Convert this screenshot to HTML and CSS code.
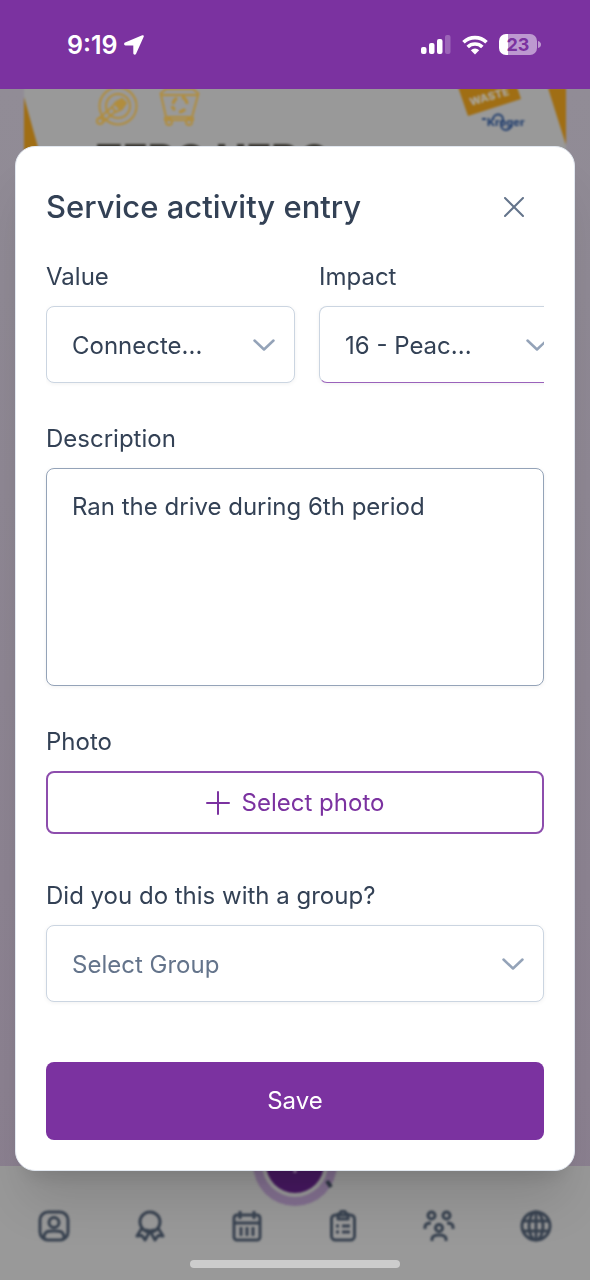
FILE: index.html
```html
<!DOCTYPE html>
<html lang="en">
<head>
<meta charset="utf-8">
<meta name="viewport" content="width=device-width, initial-scale=1">
<title>Service activity entry</title>
<link rel="stylesheet" href="styles.css">
</head>
<body>
<div class="app">
  <header class="status">
    <div class="status-left">
      <span class="time">9:19</span>
      <svg width="20" height="20" viewBox="0 0 20 20" aria-hidden="true"><path d="M18.300 .3 1 7.600c-1.400.7-1.100 2.800.5 2.800h7.800v7.900c0 1.500 2.100 1.900 2.800.4L19.700 1.800C20.200.6 19.400-.2 18.300.3z" fill="#fff"/></svg>
    </div>
    <div class="status-right">
      <svg width="30" height="20" viewBox="0 0 30 20" aria-hidden="true" fill="#fff"><rect x="0" y="12" width="5.500" height="7" rx="2"/><rect x="8" y="8" width="5.500" height="11" rx="2"/><rect x="16" y="4" width="5.500" height="15" rx="2"/><rect x="24" y="0" width="5.500" height="19" rx="2" opacity=".25"/></svg>
      <svg width="26" height="20" viewBox="0 0 26 20" aria-hidden="true"><g fill="none" stroke="#fff" stroke-width="3.600"><path d="M1.500 7.300a16.500 16.500 0 0 1 23 0"/><path d="M5.700 12a10.500 10.500 0 0 1 14.600 0"/></g><path d="M8.800 15.200a6 6 0 0 1 8.400 0L13 19.500z" fill="#fff"/></svg>
      <div class="battery"><span class="charge">23</span><svg width="3" height="7" viewBox="0 0 3 7" aria-hidden="true"><path d="M0 0q3 1 3 3.500T0 7z" fill="#fff" opacity=".5"/></svg></div>
    </div>
  </header>

  <main class="backdrop">
    <div class="scene">
      <svg class="banner" viewBox="0 0 590 70" aria-hidden="true">
        <g class="soft">
          <rect x="24" y="-10" width="542" height="100" fill="#999"/>
          <path d="M24 8 41 69H24zM548-1h18v57z" fill="#a06e14"/>
          <g fill="none" stroke="#b18d3d" stroke-width="2">
            <circle cx="118" cy="17" r="18.500"/><circle cx="118" cy="17" r="12"/>
            <path d="m98 30 14-12M102 34l14-12M112 18l4-5 6-3 4 4-4 6-6 3z"/><circle cx="100" cy="32" r="3"/>
            <path d="m116 16 5-5 4 4-5 5z" fill="#b18d3d"/>
            <path d="M161 6l5 22h26l6-22zM160 5l6-5h27l6 5M165 28v3h28v-3"/><circle cx="169" cy="33" r="3"/><circle cx="189" cy="33" r="3"/>
            <path d="M173 15a8 8 0 0 1 4-6m5-1a8 8 0 0 1 5 7m-2 5a8 8 0 0 1-6 3m-4-2a8 8 0 0 1-3-4" stroke-width="3"/>
          </g>
          <path d="M458-2h59l4 12-53 17z" fill="#a06e14"/>
          <text x="471" y="17" transform="rotate(-16 471 17)" class="waste">WASTE</text>
          <text x="487" y="37" class="kroger">Kroger</text>
          <path d="M493 31a5 5 0 0 1 10-1c0 3-2 3-2 6a5 5 0 1 0 10 0M482 30h4" fill="none" stroke="#24406f" stroke-width="2"/>
          <text x="95" y="85" class="hero">ZERO HERO</text>
        </g>
      </svg>
      <nav class="tabs" aria-label="Main">
        <a href="#" aria-label="Profile"><svg viewBox="0 0 32 32"><rect x="2" y="2" width="28" height="28" rx="8"/><circle cx="16" cy="12.500" r="5"/><path d="M6 28c0-7 4-7 10-7s10 0 10 7"/></svg></a>
        <a href="#" aria-label="Awards"><svg viewBox="0 0 32 32"><circle cx="16" cy="12" r="10"/><path d="m8 18-5 8 5-.5L11 30l5-9 5 9 3-4.500 5 .5-5-8M11 20l5 1 5-1"/></svg></a>
        <a href="#" aria-label="Calendar"><svg viewBox="0 0 32 32"><rect x="3" y="5" width="26" height="25" rx="3"/><path d="M3 13h26M9 1v8M23 1v8M10 17v9M16 17v9M22 17v9"/></svg></a>
        <a href="#" aria-label="Log"><svg viewBox="0 0 32 32"><rect x="4.500" y="5" width="23" height="25" rx="4"/><path d="M11 4h2a3 3 0 0 1 6 0h2v5H11zM9 16h3M15 16h8M9 22h3M15 22h8"/></svg></a>
        <a href="#" aria-label="Groups"><svg viewBox="0 0 32 32"><circle cx="8.500" cy="5.500" r="3.500"/><circle cx="23.500" cy="5.500" r="3.500"/><circle cx="16" cy="18" r="3.500"/><path d="M2 19v-2q0-4 6-4M30 19v-2q0-4-6-4M9 31v-2q0-4 7-4t7 4v2"/></svg></a>
        <a href="#" aria-label="Explore"><svg viewBox="0 0 32 32"><circle cx="16" cy="16" r="14"/><ellipse cx="16" cy="16" rx="7" ry="14"/><path d="M16 2v28M3 11h26M3 21h26"/></svg></a>
        <svg class="add" viewBox="0 0 90 90" aria-hidden="true"><circle cx="45" cy="45" r="42" fill="#826f8f"/><circle cx="45" cy="45" r="33" fill="#999"/><circle cx="45" cy="45" r="29" fill="#461860"/><path d="M45 30v24" stroke="#8a7394" stroke-width="3"/><path d="m77 62 4 6" stroke="#2c3442" stroke-width="4"/></svg>
      </nav>
    </div>

    <form class="dialog" role="dialog" aria-labelledby="title">
      <div class="head">
        <h1 id="title">Service activity entry</h1>
        <button type="button" class="close" aria-label="Close"><svg width="20" height="20" viewBox="0 0 20 20"><path d="m1 1 18 18M19 1 1 19"/></svg></button>
      </div>
      <div class="row">
        <div class="field">
          <label for="value">Value</label>
          <div class="pick"><select id="value" class="box"><option>Connecte...</option></select><svg class="chevron" viewBox="0 0 22 12"><path d="m1.500 1.500 9.500 9 9.500-9"/></svg></div>
        </div>
        <div class="field">
          <label for="impact">Impact</label>
          <div class="pick"><select id="impact" class="box active"><option>16 - Peac...</option></select><svg class="chevron" viewBox="0 0 22 12"><path d="m1.500 1.500 9.500 9 9.500-9"/></svg></div>
        </div>
      </div>
      <div class="field">
        <label for="description">Description</label>
        <textarea id="description" class="box notes" rows="5">Ran the drive during 6th period</textarea>
      </div>
      <div class="field">
        <label for="photo">Photo</label>
        <button id="photo" type="button" class="photo"><svg width="24" height="24" viewBox="0 0 24 24"><path d="M12 1v22M1 12h22"/></svg>Select photo</button>
      </div>
      <div class="field group">
        <label for="group">Did you do this with a group?</label>
        <div class="pick"><select id="group" class="box empty"><option>Select Group</option></select><svg class="chevron" viewBox="0 0 22 12"><path d="m1.500 1.500 9.500 9 9.500-9"/></svg></div>
      </div>
      <button type="submit" class="save">Save</button>
    </form>
    <div class="home-bar"></div>
  </main>
</div>
</body>
</html>
```
FILE: styles.css
```css
* { box-sizing: border-box; }
body { margin: 0; font-family: Inter, "Liberation Sans", sans-serif; font-size: 24px; line-height: 36px; color: #334155; }
button, select, textarea { font: inherit; color: inherit; margin: 0; }
svg { flex: none; }
.app { min-height: 100vh; display: flex; flex-direction: column; }
.status { height: 89px; flex: none; background: #7b32a0; color: #fff; padding: 0 49px 0 67px; display: flex; align-items: center; justify-content: space-between; }
.status-left { display: flex; align-items: center; gap: 6px; }
.time { font-weight: 600; font-size: 25px; }
.status-right { display: flex; align-items: center; gap: 11px; }
.battery { display: flex; align-items: center; gap: 1px; }
.charge { width: 38px; height: 21px; border-radius: 7px; background: linear-gradient(90deg, #fff 9px, #bd99d0 9px); color: #7b32a0; font-size: 18px; font-weight: 700; line-height: 21px; text-align: center; }
.backdrop { flex: 1; position: relative; overflow: hidden; padding: 57px 15px 109px; background: linear-gradient(#918c96, #8b8090); }
.scene { position: absolute; inset: 0; display: flex; flex-direction: column; justify-content: space-between; }
.soft, .tabs svg { filter: blur(1px); }
.banner { width: 100%; display: block; }
.waste { font: 800 11px Inter, sans-serif; fill: #aaa69c; }
.kroger { font: 800 11px Inter, sans-serif; fill: #24406f; }
.hero { font: 800 41px Inter, sans-serif; fill: #37352f; }
.tabs { position: relative; height: 114px; padding: 44px 6px 0; background: #999; display: grid; grid-template-columns: repeat(6, 1fr); }
.tabs a { display: flex; justify-content: center; align-items: flex-start; }
.tabs a svg { width: 32px; height: 32px; fill: none; stroke: #384250; stroke-width: 3; stroke-linejoin: round; }
.add { position: absolute; width: 90px; height: 90px; left: calc(50% - 45px); top: -47px; }
.dialog { position: relative; background: #fff; border: 1px solid #e2e8f0; border-radius: 20px; padding: 30px; box-shadow: 0 40px 50px -10px rgba(0,0,0,.12), 0 16px 20px -12px rgba(0,0,0,.12); display: flex; flex-direction: column; gap: 38px; }
.head { display: flex; align-items: center; justify-content: space-between; height: 60px; margin-bottom: -16px; }
h1 { margin: 0; font-size: 31px; font-weight: 500; }
.close { width: 60px; height: 60px; padding: 0; border: 0; background: none; display: grid; place-items: center; }
.close path { stroke: #64748b; stroke-width: 2; stroke-linecap: round; }
.row { display: grid; grid-template-columns: 50% 50%; gap: 24px; overflow-x: clip; }
.field { display: flex; flex-direction: column; gap: 11px; min-width: 0; }
.pick { position: relative; display: flex; }
.box { width: 100%; height: 77px; padding: 2px 60px 0 25px; border: 1px solid #cbd5e1; border-radius: 8px; background: #fff; box-shadow: 0 1px 4px rgba(18,18,23,.06); appearance: none; }
.active { border-bottom-color: #9a62bb; }
.empty { color: #64748b; }
.chevron { position: absolute; right: 20px; top: 33px; width: 22px; height: 12px; fill: none; stroke: #94a3b8; stroke-width: 2.500; stroke-linecap: round; stroke-linejoin: round; pointer-events: none; }
.notes { height: 218px; padding: 20px 25px; border-color: #94a3b8; resize: none; display: block; }
.photo { height: 63px; border: 2px solid #8d4dad; border-radius: 8px; background: #fff; color: #7b32a0; display: flex; align-items: center; justify-content: center; gap: 12px; }
.photo path { stroke: #7b32a0; stroke-width: 2; stroke-linecap: round; }
.group { padding: 6px 0 22px; }
.save { height: 78px; border: 0; border-radius: 8px; background: #7b32a0; color: #fff; }
.home-bar { position: absolute; left: 50%; bottom: 12px; width: 210px; height: 8px; margin-left: -105px; border-radius: 4px; background: #ccc; }
```
